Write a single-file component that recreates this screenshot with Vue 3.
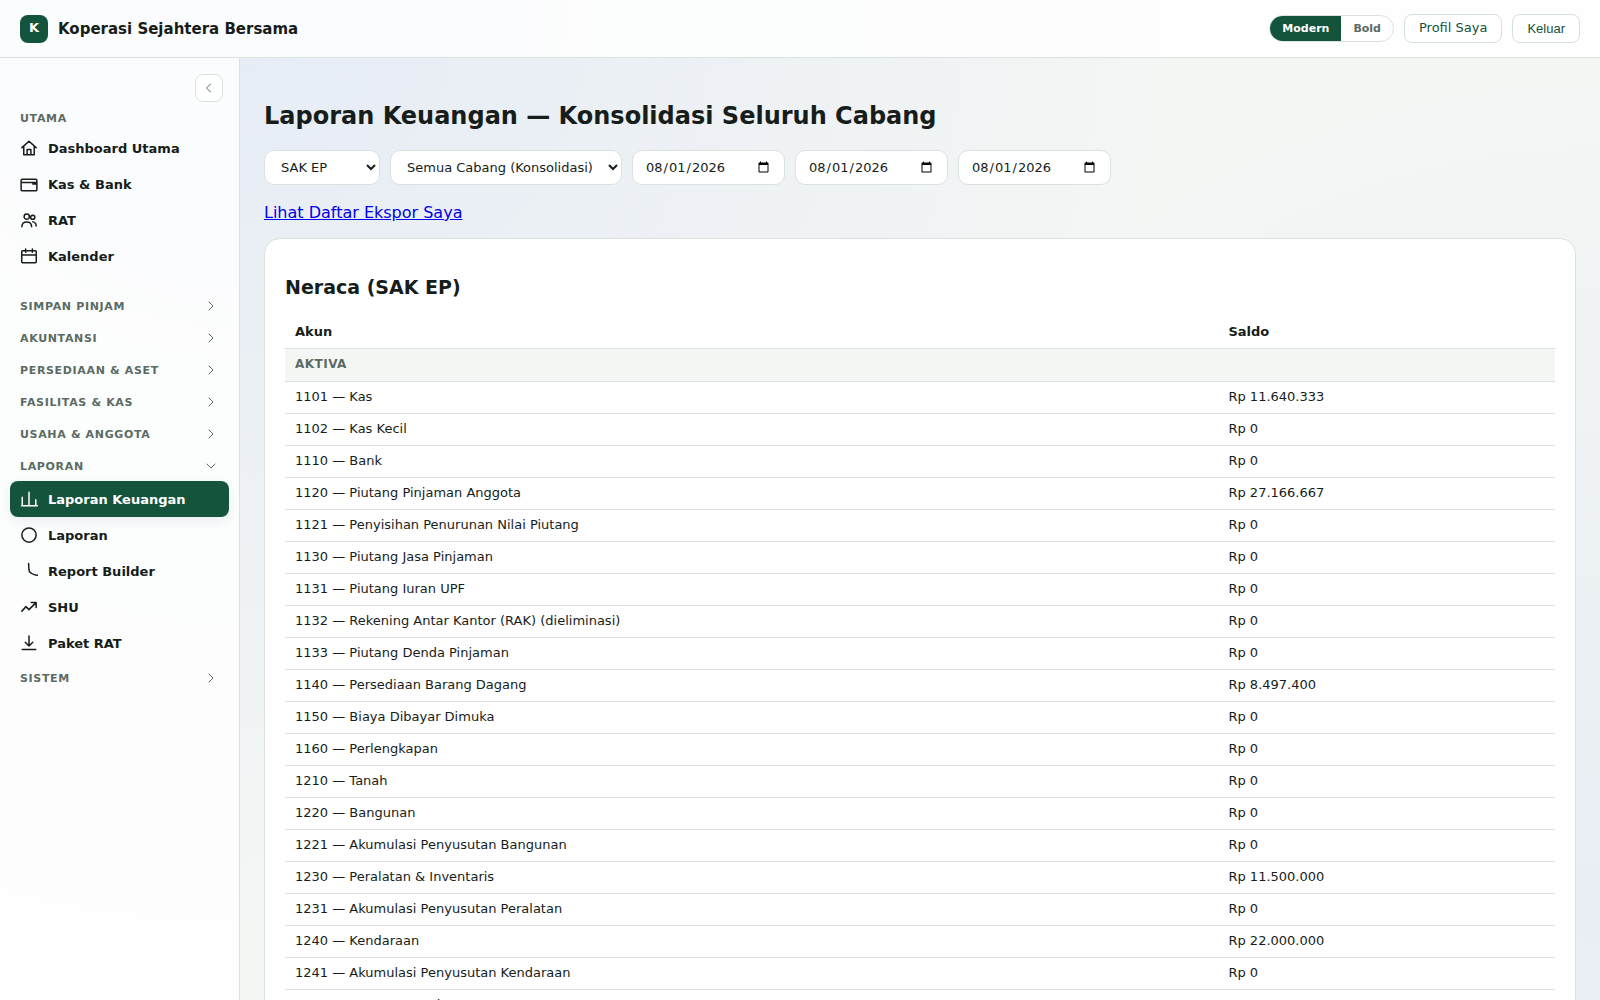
<script setup>
import { ref } from 'vue'

const theme = ref('modern')
const standard = ref('SAK EP')
const branch = ref('Semua Cabang (Konsolidasi)')
const dates = ref([
  { label: 'Tanggal neraca', value: '2026-08-01' },
  { label: 'Dari tanggal', value: '2026-08-01' },
  { label: 'Sampai tanggal', value: '2026-08-01' },
])

const icons = {
  home: 'M2.5 11.5L12 3l9.5 8.500M5 9.500V21h14V9.500M9.500 21v-7h5v7',
  wallet: 'M3 5.500h18a1.500 1.500 0 0 1 1.500 1.500v12.500a1.500 1.500 0 0 1-1.500 1.500H3a1.500 1.500 0 0 1-1.500-1.500V7A1.500 1.500 0 0 1 3 5.500zM2 10h20M17 12h4',
  users: 'M9 4a3.500 3.500 0 1 0 0 7 3.500 3.500 0 0 0 0-7zM2.500 21c0-4 2.500-6.500 6.500-6.500s6.500 2.500 6.500 6.500M17 5.500a2.800 2.800 0 1 0 0 5.600 2.800 2.800 0 0 0 0-5.600zM17 14.500c2.500.2 4.500 2.500 4.500 5.500',
  calendar: 'M3.500 5h17a1.200 1.200 0 0 1 1.200 1.200v13.600a1.200 1.200 0 0 1-1.200 1.200h-17a1.200 1.200 0 0 1-1.200-1.200V6.200A1.200 1.200 0 0 1 3.500 5zM2.500 10.500h19M7.500 2.500V7M16.500 2.500V7',
  chart: 'M2 21h21M3 21V9.500M12 21V3M21 21v-8',
  circle: 'M12 2.500a9.500 9.500 0 1 0 0 19 9.500 9.500 0 0 0 0-19z',
  pie: 'M11.500 2c0 4 .2 8 1 11 2 2 5 3.700 8 4.300l3 .3',
  trend: 'M2.500 17.500L8 11.500l4 4 9-9M15 6h6.500v6.500',
  download: 'M12 2.500V16M7 11l5 5 5-5M3 20.500h18',
}

const mainLinks = [
  { label: 'Dashboard Utama', icon: 'home' },
  { label: 'Kas & Bank', icon: 'wallet' },
  { label: 'RAT', icon: 'users' },
  { label: 'Kalender', icon: 'calendar' },
]

const groups = ref([
  { label: 'SIMPAN PINJAM', open: false, links: [] },
  { label: 'AKUNTANSI', open: false, links: [] },
  { label: 'PERSEDIAAN & ASET', open: false, links: [] },
  { label: 'FASILITAS & KAS', open: false, links: [] },
  { label: 'USAHA & ANGGOTA', open: false, links: [] },
  {
    label: 'LAPORAN',
    open: true,
    links: [
      { label: 'Laporan Keuangan', icon: 'chart', active: true },
      { label: 'Laporan', icon: 'circle' },
      { label: 'Report Builder', icon: 'pie' },
      { label: 'SHU', icon: 'trend' },
      { label: 'Paket RAT', icon: 'download' },
    ],
  },
  { label: 'SISTEM', open: false, links: [] },
])

const accounts = [
  ['1101', 'Kas', 11640333],
  ['1102', 'Kas Kecil', 0],
  ['1110', 'Bank', 0],
  ['1120', 'Piutang Pinjaman Anggota', 27166667],
  ['1121', 'Penyisihan Penurunan Nilai Piutang', 0],
  ['1130', 'Piutang Jasa Pinjaman', 0],
  ['1131', 'Piutang Iuran UPF', 0],
  ['1132', 'Rekening Antar Kantor (RAK) (dieliminasi)', 0],
  ['1133', 'Piutang Denda Pinjaman', 0],
  ['1140', 'Persediaan Barang Dagang', 8497400],
  ['1150', 'Biaya Dibayar Dimuka', 0],
  ['1160', 'Perlengkapan', 0],
  ['1210', 'Tanah', 0],
  ['1220', 'Bangunan', 0],
  ['1221', 'Akumulasi Penyusutan Bangunan', 0],
  ['1230', 'Peralatan & Inventaris', 11500000],
  ['1231', 'Akumulasi Penyusutan Peralatan', 0],
  ['1240', 'Kendaraan', 22000000],
  ['1241', 'Akumulasi Penyusutan Kendaraan', 0],
  ['1250', 'Aset Tetap Lain', 0],
]

function rupiah(n) {
  return 'Rp ' + String(n).replace(/\B(?=(\d{3})+$)/g, '.')
}
</script>

<template>
  <div class="app">
    <header class="topbar">
      <span class="logo">K</span>
      <strong class="brand">Koperasi Sejahtera Bersama</strong>
      <div class="theme-switch">
        <button type="button" :class="{ on: theme === 'modern' }" @click="theme = 'modern'">Modern</button>
        <button type="button" :class="{ on: theme === 'bold' }" @click="theme = 'bold'">Bold</button>
      </div>
      <a class="btn" href="#profil">Profil Saya</a>
      <button class="btn logout" type="button">Keluar</button>
    </header>

    <div class="body">
      <aside class="sidebar">
        <button class="collapse" type="button" aria-label="Ciutkan menu">
          <svg width="12" height="12" viewBox="0 0 24 24"><path d="M15 4l-8 8 8 8" /></svg>
        </button>
        <nav>
          <div class="nav-title">UTAMA</div>
          <a v-for="l in mainLinks" :key="l.label" class="nav-link" href="#">
            <svg width="18" height="18" viewBox="0 0 24 24"><path :d="icons[l.icon]" /></svg>
            {{ l.label }}
          </a>
          <div class="groups">
            <template v-for="g in groups" :key="g.label">
              <button class="nav-group" type="button" :aria-expanded="g.open" @click="g.open = !g.open">
                {{ g.label }}
                <svg width="12" height="12" viewBox="0 0 24 24">
                  <path :d="g.open ? 'M4 8l8 8 8-8' : 'M8 4l8 8-8 8'" />
                </svg>
              </button>
              <div v-if="g.open">
                <a v-for="l in g.links" :key="l.label" class="nav-link" :class="{ active: l.active }" href="#">
                  <svg width="18" height="18" viewBox="0 0 24 24"><path :d="icons[l.icon]" /></svg>
                  {{ l.label }}
                </a>
              </div>
            </template>
          </div>
        </nav>
      </aside>

      <main class="content">
        <h1>Laporan Keuangan — Konsolidasi Seluruh Cabang</h1>
        <form class="filters" @submit.prevent>
          <select v-model="standard" aria-label="Standar akuntansi">
            <option>SAK EP</option>
            <option>SAK EMKM</option>
          </select>
          <select v-model="branch" aria-label="Cabang">
            <option>Semua Cabang (Konsolidasi)</option>
          </select>
          <input v-for="d in dates" :key="d.label" v-model="d.value" type="date" :aria-label="d.label" />
        </form>
        <a class="export-link" href="#ekspor">Lihat Daftar Ekspor Saya</a>

        <section class="card">
          <h2>Neraca (SAK EP)</h2>
          <table>
            <thead>
              <tr><th scope="col">Akun</th><th scope="col" class="amount">Saldo</th></tr>
            </thead>
            <tbody>
              <tr class="section"><td colspan="2">AKTIVA</td></tr>
              <tr v-for="[code, name, saldo] in accounts" :key="code">
                <td>{{ code }} — {{ name }}</td>
                <td>{{ rupiah(saldo) }}</td>
              </tr>
            </tbody>
          </table>
        </section>
      </main>
    </div>
  </div>
</template>

<style>
body {
  margin: 0;
}
</style>

<style scoped>
.app {
  --green: #14533c;
  --ink: #161d1a;
  --muted: #5b6b63;
  --line: #d9e2de;
  display: flex;
  flex-direction: column;
  height: 100vh;
  overflow: hidden;
  color: var(--ink);
  font-family: "DejaVu Sans", sans-serif;
  font-size: 16px;
  background:
    radial-gradient(circle at 15% 0%, #e6ecf6 0%, transparent 55%),
    radial-gradient(circle at 100% 90%, #e8eef4 0%, transparent 45%),
    #f4f6f4;
}

* {
  box-sizing: border-box;
}

svg {
  flex: none;
  fill: none;
  stroke: currentColor;
  stroke-width: 2;
  stroke-linecap: round;
  stroke-linejoin: round;
}

.topbar {
  display: flex;
  align-items: center;
  gap: 10px;
  flex: none;
  height: 58px;
  padding: 0 20px;
  background: rgba(255, 255, 255, 0.82);
  border-bottom: 1px solid var(--line);
}

.logo {
  width: 28px;
  height: 28px;
  border-radius: 8px;
  background: var(--green);
  color: #fff;
  font-size: 13px;
  font-weight: 700;
  line-height: 26px;
  text-align: center;
}

.brand {
  margin-right: auto;
  font-size: 15px;
}

.theme-switch {
  display: flex;
  overflow: hidden;
  border: 1px solid var(--line);
  border-radius: 999px;
}

.theme-switch button {
  height: 25px;
  padding: 0 12px;
  border: 0;
  background: transparent;
  color: var(--muted);
  font-family: inherit;
  font-size: 11px;
  font-weight: 700;
}

.theme-switch button.on {
  background: var(--green);
  color: #fff;
}

.btn {
  height: 29px;
  padding: 0 14px;
  border: 1px solid #d3e2db;
  border-radius: 8px;
  background: #fff;
  color: var(--green);
  font-size: 13px;
  line-height: 26px;
  text-decoration: none;
}

.logout {
  font-family: "Liberation Sans", sans-serif;
}

.body {
  display: flex;
  flex: 1;
  min-height: 0;
}

.sidebar {
  flex: none;
  width: 240px;
  padding: 16px 10px;
  background: rgba(255, 255, 255, 0.82);
  border-right: 1px solid var(--line);
}

.collapse {
  display: flex;
  align-items: center;
  justify-content: center;
  width: 28px;
  height: 28px;
  margin: 0 6px 0 auto;
  padding: 0;
  border: 1px solid var(--line);
  border-radius: 8px;
  background: #fff;
  color: var(--muted);
}

.nav-title,
.nav-group {
  color: var(--muted);
  font-family: inherit;
  font-size: 11px;
  font-weight: 700;
  letter-spacing: 0.06em;
}

.nav-title {
  padding: 10px 10px 5px;
  line-height: 13px;
}

.nav-link {
  display: flex;
  align-items: center;
  gap: 10px;
  height: 36px;
  padding: 0 10px;
  border-radius: 8px;
  color: var(--ink);
  font-size: 13px;
  font-weight: 700;
  text-decoration: none;
}

.nav-link.active {
  background: var(--green);
  color: #fff;
  box-shadow: 0 4px 12px rgba(20, 60, 110, 0.08);
}

.groups {
  margin-top: 15px;
}

.nav-group {
  display: flex;
  align-items: center;
  justify-content: space-between;
  width: 100%;
  height: 32px;
  padding: 2px 12px 0 10px;
  border: 0;
  background: none;
}

.content {
  flex: 1;
  min-width: 0;
  padding: 40px 24px;
}

h1 {
  margin: 0 0 16px;
  font-size: 24px;
  line-height: 36px;
}

.filters {
  display: flex;
  flex-wrap: wrap;
  gap: 10px;
  margin-bottom: 16px;
}

.filters select,
.filters input {
  height: 35px;
  border: 1px solid var(--line);
  border-radius: 10px;
  background: #fff;
  color: var(--ink);
  font-family: inherit;
  font-size: 13px;
}

.filters select {
  padding: 0 12px;
}

.filters input {
  width: 153px;
  padding: 0 12px;
}

.export-link {
  display: block;
  width: fit-content;
  margin-bottom: 13px;
  color: #0000ee;
  line-height: 24px;
}

.card {
  padding: 32px 20px;
  border: 1px solid var(--line);
  border-radius: 16px;
  background: #fff;
}

h2 {
  margin: 0 0 13px;
  font-size: 19px;
  line-height: 32px;
}

table {
  width: 100%;
  border-collapse: collapse;
  font-size: 13px;
}

th,
td {
  height: 32px;
  padding: 0 10px 1px;
  border-bottom: 1px solid var(--line);
  line-height: 15px;
  text-align: left;
}

.amount {
  width: 26.5%;
}

.section td {
  height: 33px;
  background: #f4f6f4;
  color: var(--muted);
  font-size: 12px;
  font-weight: 700;
  letter-spacing: 0.04em;
}
</style>
